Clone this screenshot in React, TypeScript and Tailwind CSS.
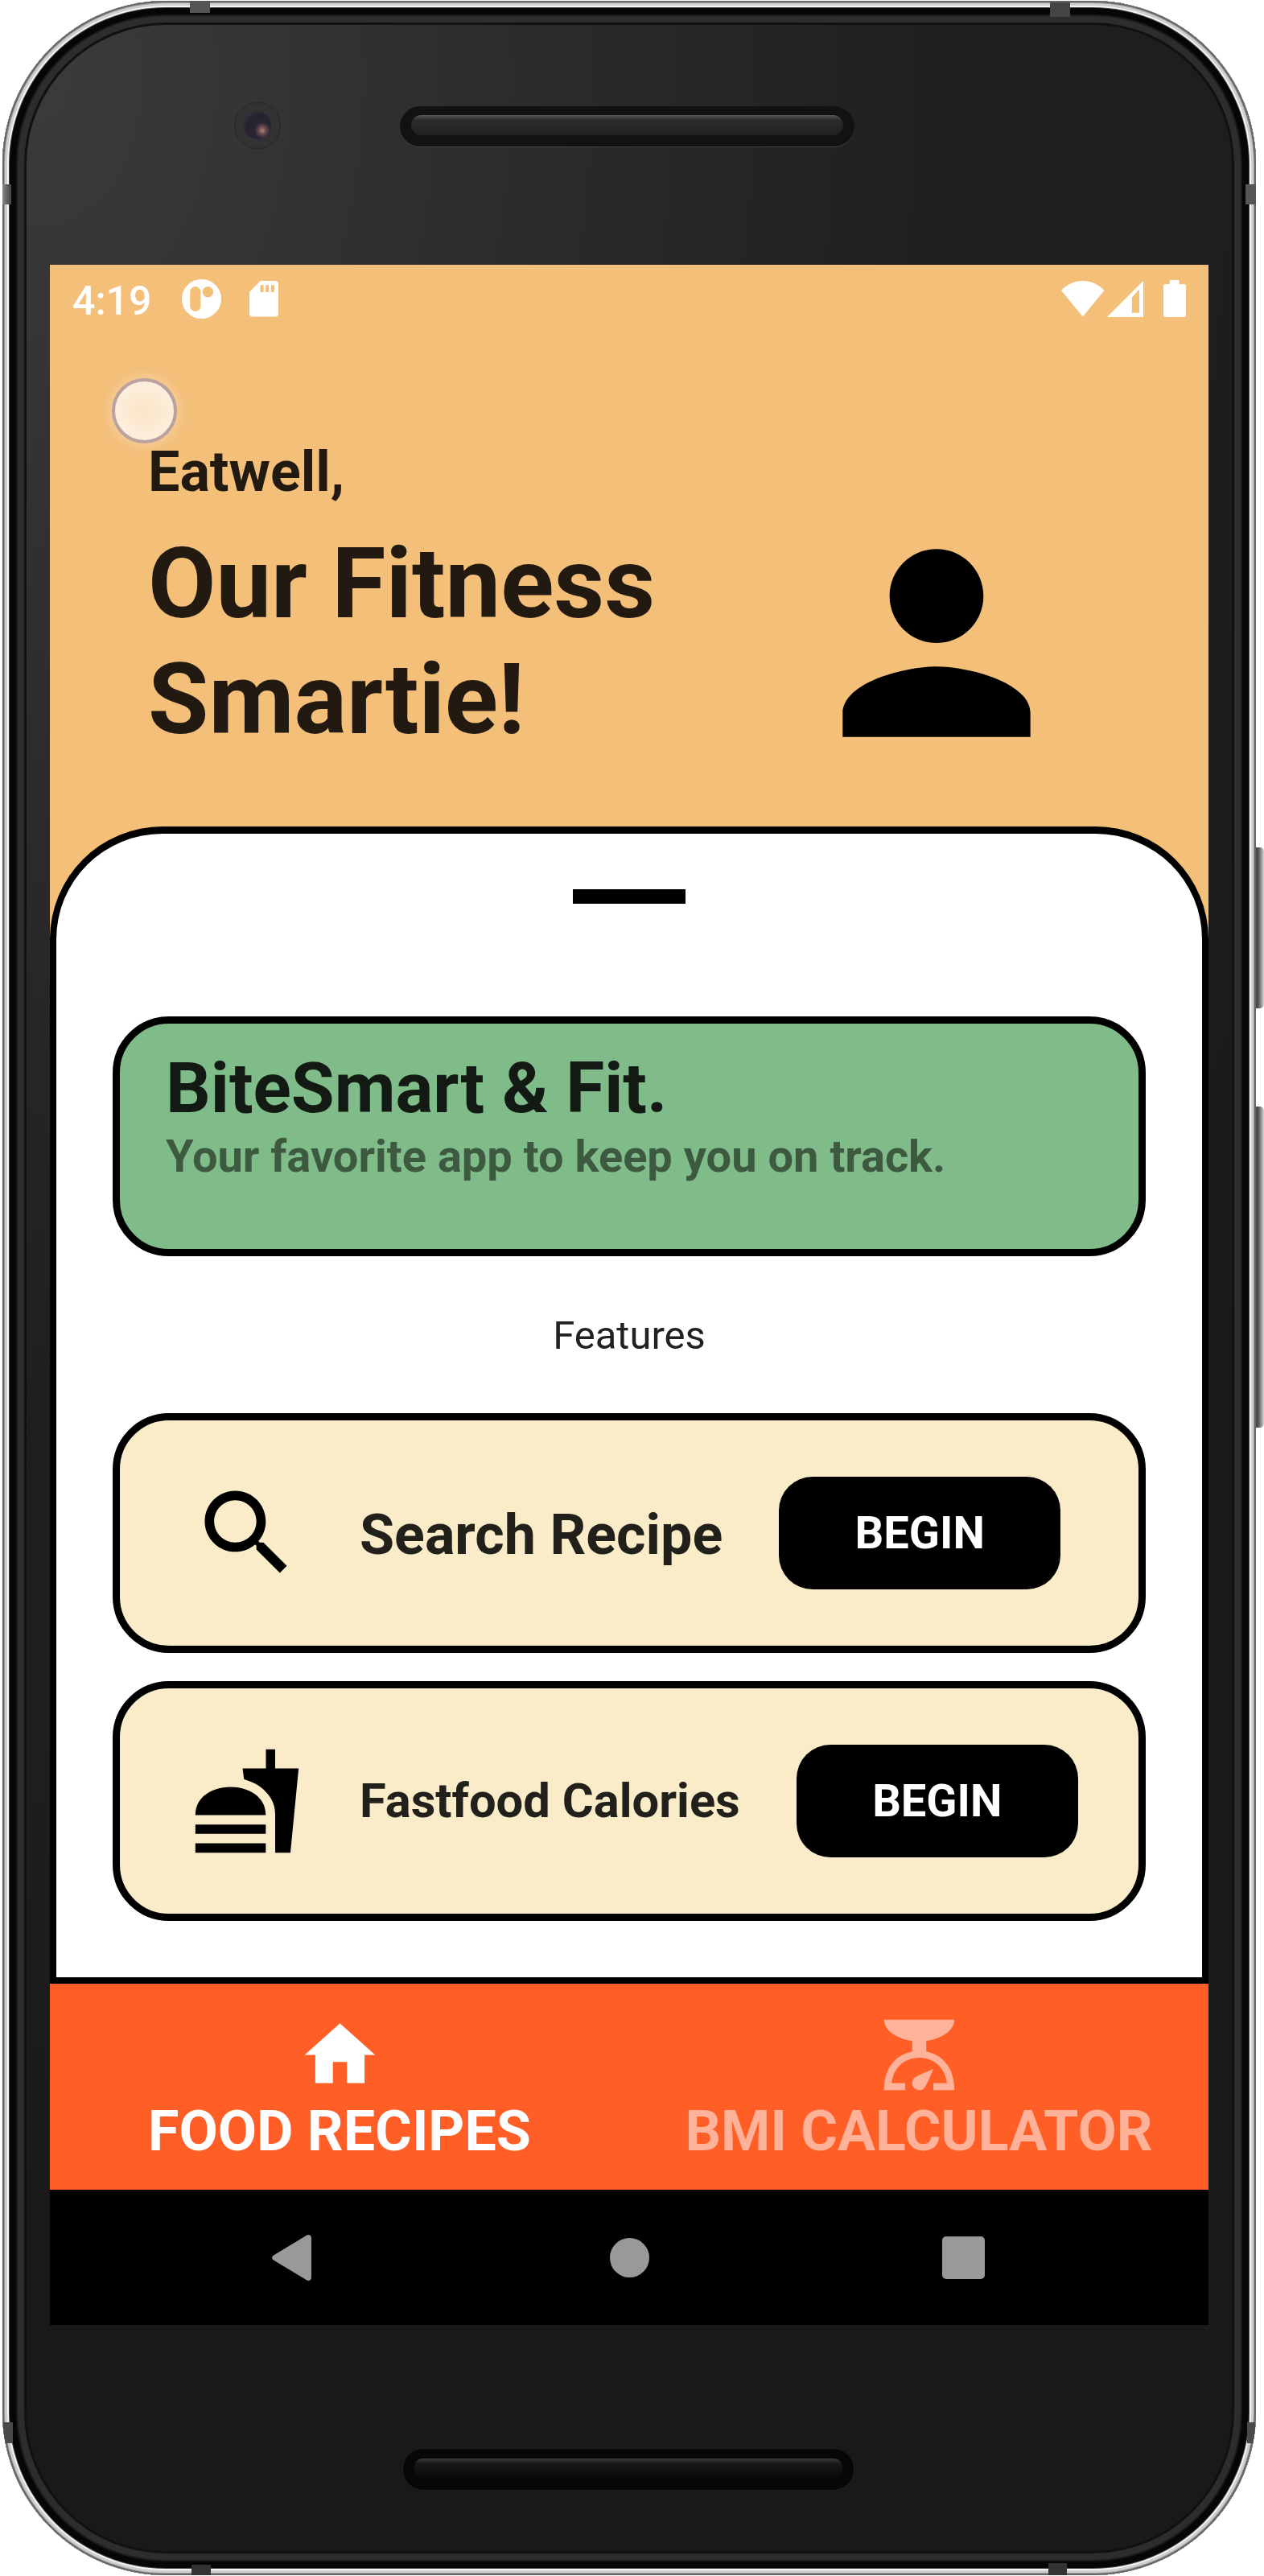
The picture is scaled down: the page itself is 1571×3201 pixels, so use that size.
import type { ReactNode } from "react";

const SearchIcon = () => (
  <svg viewBox="0 0 24 24" className="size-[140px] shrink-0" fill="#000">
    <path d="M15.5 14h-.79l-.28-.27C15.41 12.59 16 11.11 16 9.5 16 5.91 13.09 3 9.5 3S3 5.91 3 9.5 5.91 16 9.5 16c1.61 0 3.09-.59 4.23-1.57l.27.28v.79l5 4.99L20.49 19l-4.99-5zm-6 0C7.01 14 5 11.99 5 9.5S7.01 5 9.5 5 14 7.01 14 9.5 11.99 14 9.5 14z" />
  </svg>
);

const FastfoodIcon = () => (
  <svg viewBox="0 0 24 24" className="size-[140px] shrink-0" fill="#000">
    <path d="M18 5.05V1h-1.97v4.05h-4.97l.3 2.34c1.71.47 3.31 1.32 4.27 2.26C17.06 11.07 18 12.54 18 14.94V23h3.25L23 5.05z" />
    <path d="M16 15C16 7 1 7 1 15zM1 17h15v2H1zM1 21h15v2H1z" />
  </svg>
);

const PersonIcon = () => (
  <svg viewBox="0 0 24 24" className="mt-[211px] mr-[163px] size-[350px] shrink-0" fill="#000">
    <path d="M12 12c2.21 0 4-1.79 4-4s-1.79-4-4-4-4 1.79-4 4 1.79 4 4 4zm0 2c-2.67 0-8 1.34-8 4v2h16v-2c0-2.66-5.33-4-8-4z" />
  </svg>
);

const HomeIcon = () => (
  <svg viewBox="0 0 24 24" className="size-[105px]" fill="currentColor">
    <path d="M10 20v-6h4v6h5v-8h3L12 3 2 12h3v8z" />
  </svg>
);

const ScaleIcon = () => (
  <svg viewBox="0 0 24 24" className="size-[105px]" fill="currentColor">
    <path d="M14 11V8c4.56-.58 8-3.1 8-6H2c0 2.9 3.44 5.42 8 6v3c-3.68.73-8 3.61-8 11h6v-2H4.13c.93-6.83 6.65-7.2 7.87-7.2s6.94.37 7.87 7.2H16v2h6c0-7.39-4.32-10.27-8-11z" />
    <path d="M12 22c-1.1 0-2-.9-2-2 0-.55.22-1.05.59-1.41C11.39 17.79 16 16 16 16s-1.79 4.61-2.59 5.41c-.36.37-.86.59-1.41.59z" />
  </svg>
);

function StatusBar() {
  return (
    <div className="flex h-[84px] items-center pr-[28px] pl-[28px] text-white">
      <span className="w-[136px] pt-[5px] text-[50px] leading-[58px] font-medium">4:19</span>
      <svg width="49" height="49" viewBox="0 0 49 49">
        <path
          fill="#fff"
          fillRule="evenodd"
          d="M24.5 0a24.5 24.5 0 1 1 0 49 24.5 24.5 0 0 1 0-49zM16.8 9a6.6 6.6 0 0 0-6.6 6.6v17.8a6.6 6.6 0 0 0 13.2 0V15.600a6.600 6.600 0 0 0-6.600-6.600zM32.400 9a6.700 6.700 0 1 0 0 13.400 6.700 6.700 0 0 0 0-13.400z"
        />
      </svg>
      <svg width="36" height="45" viewBox="0 0 36 45" className="ml-[35px]">
        <path
          fill="#fff"
          fillRule="evenodd"
          d="M13.500 0H32a4 4 0 0 1 4 4v36.500a4 4 0 0 1-4 4H4a4 4 0 0 1-4-4V14zM13.500 5.200v8.700h4V5.200zM20.200 5.200v8.700h4V5.200zM26.900 5.200v8.700h4V5.200z"
        />
      </svg>
      <svg width="54" height="45" viewBox="0 0 54 45" className="ml-auto">
        <path fill="#fff" d="M0 12C7 4.500 16 0 26.700 0S46.500 4.500 53.400 12L26.700 44.500z" />
      </svg>
      <svg width="45" height="45" viewBox="0 0 45 45" className="ml-[3px]">
        <path fill="#fff" fillRule="evenodd" d="M45 0v45H0zM40 10.500l-9.200 10V39.700H40z" />
      </svg>
      <svg width="28" height="46" viewBox="0 0 28 46" className="ml-[25px]">
        <path fill="#fff" d="M8 0h11.500v5H25a3 3 0 0 1 3 3v35a3 3 0 0 1-3 3H3a3 3 0 0 1-3-3V8a3 3 0 0 1 3-3h5z" />
      </svg>
    </div>
  );
}

function Feature({ icon, children }: { icon: ReactNode; children: ReactNode }) {
  return (
    <div className="flex h-[298px] items-center gap-[70px] rounded-[70px] border-9 border-black bg-[#faecc9] pl-[88px]">
      {icon}
      {children}
      <button className="h-[140px] w-[350px] shrink-0 rounded-[42px] bg-black text-[56px] font-bold text-white">
        BEGIN
      </button>
    </div>
  );
}

function SideButtons() {
  return (
    <>
      <div className="absolute top-[1053px] left-[1557px] h-[200px] w-[14px] rounded-r-[5px] bg-linear-to-r from-[#2c2c2c] via-[#555] to-[#d8d8d8]" />
      <div className="absolute top-[1375px] left-[1557px] h-[399px] w-[14px] rounded-r-[5px] bg-linear-to-r from-[#2c2c2c] via-[#555] to-[#d8d8d8]" />
    </>
  );
}

function Antennas() {
  return (
    <>
      <i className="absolute top-0 left-[233px] h-[15px] w-[25px] bg-[#555]" />
      <i className="absolute top-[2px] left-[1302px] h-[18px] w-[25px] bg-[#444]" />
      <i className="absolute top-[228px] left-0 h-[25px] w-[11px] bg-linear-to-r from-[#888] to-[#444]" />
      <i className="absolute top-[228px] right-0 h-[25px] w-[13px] bg-[#555]" />
      <i className="absolute top-[3009px] left-[1px] h-[26px] w-[12px] bg-[#4a4a4a]" />
      <i className="absolute top-[3009px] right-[1px] h-[26px] w-[10px] bg-[#4a4a4a]" />
      <i className="absolute bottom-0 left-[235px] h-[13px] w-[24px] bg-[#333]" />
      <i className="absolute bottom-0 left-[1300px] h-[15px] w-[23px] bg-[#333]" />
    </>
  );
}

export default function App() {
  return (
    <div className="relative h-[3201px] w-[1571px] overflow-hidden bg-white pt-[1px] pl-[3px] font-['Roboto',sans-serif]">
      <SideButtons />
      <div className="relative h-[3199px] w-[1558px] overflow-hidden rounded-[203px] bg-[radial-gradient(1450px_2100px_at_3%_3%,#3b3b3b,#2c2c2c_40%,#1f1f1f_78%,#1e1e1e_100%,#191919_130%)] pl-[59px] shadow-[inset_0_0_0_2px_#666,inset_0_0_0_3px_#999,inset_0_0_0_6px_#cfcfcf,inset_0_0_0_8px_#f4f4f4,inset_0_0_0_9px_#444,inset_0_0_0_17px_#060606,inset_0_0_0_19px_#1a1a1a,inset_0_0_0_27px_#2d2d2d,inset_0_0_0_30px_#111]">
        <Antennas />
        <div className="relative h-[328px]">
          <div className="absolute top-[126px] left-[229px] flex size-[58px] items-center justify-center rounded-full border border-[#262626] bg-[#323232]">
            <div className="size-[34px] rounded-full bg-[radial-gradient(circle_at_68%_68%,#b9837a_0,#6a4a50_14%,#2a2536_30%,#25222e_60%,#3b3a42)]" />
          </div>
          <div className="absolute top-[131px] left-[435px] h-[51px] w-[565px] rounded-full border-b border-[#444] bg-[#121212] px-[14px] pt-[11px]">
            <div className="h-[25px] rounded-full bg-linear-to-b from-[#585858] via-[#2b2b2b] via-25% to-[#222]" />
          </div>
        </div>

        <div className="relative h-[2560px] w-[1440px] overflow-hidden bg-[#f3bf79]">
          <StatusBar />
          <div className="absolute top-[141px] left-[77px] size-[81px] rounded-full border-4 border-[#bba29f] bg-[radial-gradient(circle,#fbe4c5,#fdeedd_70%)] shadow-[0_0_14px_3px_#f5cf9f]" />
          <header className="flex h-[614px] items-start justify-between pl-[122px] text-[#221a10]">
            <div className="relative pt-[132px] font-bold">
              <p className="text-[70px] leading-[82px]">Eatwell,</p>
              <h1 className="mt-[27px] text-[122.5px] leading-[143.5px]">
                Our Fitness
                <br />
                Smartie!
              </h1>
            </div>
            <PersonIcon />
          </header>

          <main className="h-[1438px] rounded-t-[140px] border-8 border-t-9 border-black bg-white px-[70px]">
            <div className="mx-auto mt-[69px] h-[18px] w-[140px] bg-black" />
            <section className="mt-[140px] h-[298px] rounded-[70px] border-9 border-black bg-[#80bc8a] pt-[29px] pl-[57px] font-bold">
              <h2 className="text-[87.5px] leading-[102.5px] text-[#131a14]">BiteSmart &amp; Fit.</h2>
              <p className="text-[56px] leading-[66px] text-[#3d5a41]">Your favorite app to keep you on track.</p>
            </section>
            <p className="mt-[70px] text-center text-[49px] leading-[58px] text-[#212121]">Features</p>
            <div className="mt-[67px] flex flex-col gap-[35px] font-bold text-[#22201b]">
              <Feature icon={<SearchIcon />}>
                <span className="pt-[5px] text-[70px]">Search Recipe</span>
              </Feature>
              <Feature icon={<FastfoodIcon />}>
                <span className="pt-[2px] text-[59.7px]">Fastfood Calories</span>
              </Feature>
            </div>
          </main>

          <nav className="grid h-[256px] grid-cols-2 bg-[#ff5e26] pt-[36px] text-[70px] leading-[84px] font-bold whitespace-nowrap">
            <a className="flex flex-col items-center text-white">
              <HomeIcon />
              FOOD RECIPES
            </a>
            <a className="flex flex-col items-center text-[#ffb29a]">
              <ScaleIcon />
              BMI CALCULATOR
            </a>
          </nav>

          <div className="flex h-[168px] items-center bg-black pl-[276px]">
            <svg width="49" height="57" viewBox="0 0 49 57" fill="#999">
              <path d="M43 .8c2.500-1.800 6-.3 6 3v49.400c0 3.300-3.500 4.800-6 3L2 31.500c-2.600-1.800-2.600-4.200 0-6z" />
            </svg>
            <div className="ml-[371px] size-[49px] rounded-full bg-[#999]" />
            <div className="ml-[364px] size-[53px] rounded-[5px] bg-[#999]" />
          </div>
        </div>

        <div className="ml-[438px] pt-[153px]">
          <div className="h-[53px] w-[562px] rounded-[26px] border border-[#202020] bg-[#070707] px-[14px] pt-[12px]">
            <div className="h-[26px] rounded-[10px] bg-linear-to-b from-[#3c3c3c] via-[#181818] via-25% to-[#080808]" />
          </div>
        </div>
      </div>
    </div>
  );
}
